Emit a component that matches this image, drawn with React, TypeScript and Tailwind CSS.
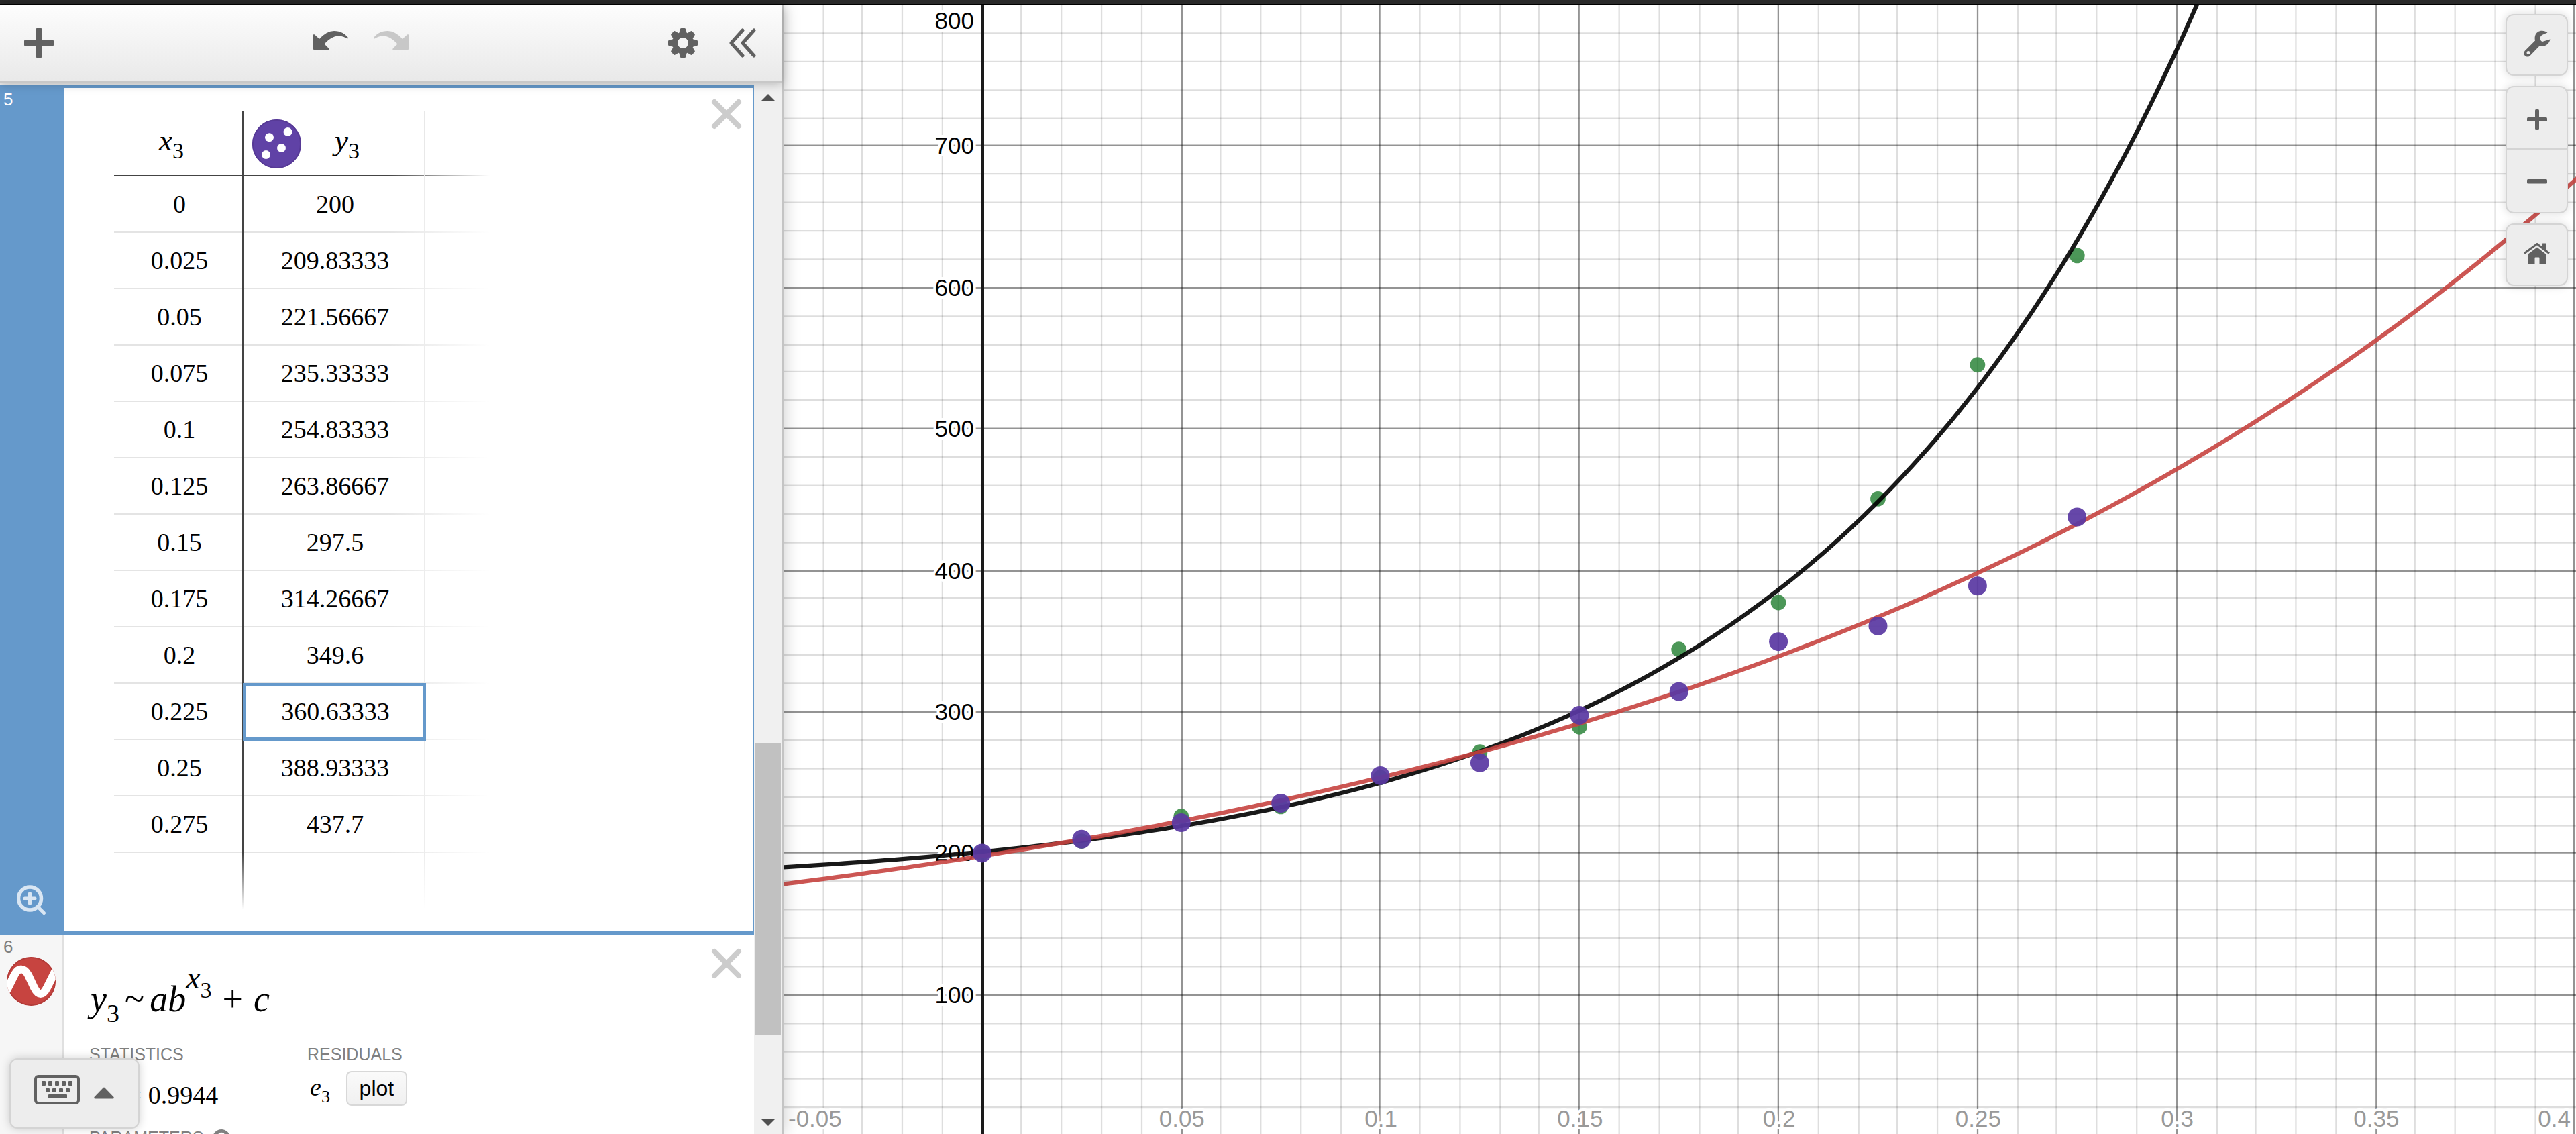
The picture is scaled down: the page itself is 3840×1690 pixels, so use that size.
import React from "react";

const rows: [string, string][] = [
  ["0", "200"],
  ["0.025", "209.83333"],
  ["0.05", "221.56667"],
  ["0.075", "235.33333"],
  ["0.1", "254.83333"],
  ["0.125", "263.86667"],
  ["0.15", "297.5"],
  ["0.175", "314.26667"],
  ["0.2", "349.6"],
  ["0.225", "360.63333"],
  ["0.25", "388.93333"],
  ["0.275", "437.7"],
];
const selectedRow = 9;

const greenPoints: [number, number][] = [
  [0, 200],
  [0.025, 208.5],
  [0.05, 226],
  [0.075, 233],
  [0.1, 253.5],
  [0.125, 271.5],
  [0.15, 289.3],
  [0.175, 344.1],
  [0.2, 377.2],
  [0.225, 450.6],
  [0.25, 545.3],
  [0.275, 622.6],
];

const px = (x: number) => 1464 + 5935.5 * x;
const py = (y: number) => 217.7 + (700 - y) * 2.1075;

// Grid lines fall on whole units of 2.497 pixels.
const gx = (i: number) => 1464.8 + Math.floor(0.15 + 23.77 * i) * 2.497;
const gy = (k: number) => 1.94 + Math.floor(86.92 + 16.879 * k) * 2.4972;

const curve = (f: (x: number) => number) => {
  const pts: string[] = [];
  for (let i = 0; i <= 230; i++) {
    const x = -0.0505 + i * 0.002;
    pts.push(`${px(x).toFixed(1)},${py(f(x)).toFixed(1)}`);
  }
  return pts.join(" ");
};
const blackCurve = curve((x) => 27.15 * Math.exp(10.286 * x) + 173.8);
const redCurve = curve((x) => 101.9 * Math.exp(4.346 * x) + 96.1);

const columns = Array.from({ length: 45 }, (_, i) => i - 4);
const lines = Array.from({ length: 40 }, (_, i) => i - 4);

function Graph() {
  return (
    <svg
      className="block h-full w-full"
      viewBox="1168 8 2672 1682"
      preserveAspectRatio="xMinYMin slice"
      role="img"
      aria-label="Graph of data and regression curves"
    >
      {columns.map((i) => (
        <line
          key={i}
          x1={gx(i)}
          x2={gx(i)}
          y1="8"
          y2="1690"
          stroke="#000"
          strokeOpacity={i % 5 === 0 ? 0.42 : 0.13}
          strokeWidth="2.3"
        />
      ))}
      {lines.map((k) => (
        <line
          key={k}
          x1="1168"
          x2="3840"
          y1={gy(k)}
          y2={gy(k)}
          stroke="#000"
          strokeOpacity={k % 5 === 0 ? 0.42 : 0.13}
          strokeWidth="2.3"
        />
      ))}
      <rect x="1463" y="8" width="4" height="1682" fill="#1a1a1a" />
      <g
        className="font-['Liberation_Sans',Arial,sans-serif] text-[35px]"
        stroke="#fff"
        strokeWidth="8"
        strokeLinejoin="round"
        paintOrder="stroke"
      >
        {[100, 200, 300, 400, 500, 600, 700].map((v) => (
          <text key={v} x="1452" y={Math.round(gy((700 - v) / 20)) + 12} textAnchor="end" fill="#000">
            {v}
          </text>
        ))}
        <text x="1452" y="43" textAnchor="end">
          800
        </text>
        <g fill="#999">
          <text x="1175" y="1679">
            -0.05
          </text>
          {[0.05, 0.1, 0.15, 0.2, 0.25, 0.3, 0.35].map((v) => (
            <text key={v} x={px(v) + 1} y="1679" textAnchor="middle">
              {v}
            </text>
          ))}
          <text x="3832" y="1679" textAnchor="end">
            0.4
          </text>
        </g>
      </g>
      <g fill="#388c46" fillOpacity="0.9">
        {greenPoints.map(([x, y]) => (
          <circle key={x} cx={px(x)} cy={py(y)} r="11.4" />
        ))}
      </g>
      <polyline points={blackCurve} fill="none" stroke="#000" strokeOpacity="0.9" strokeWidth="6.3" />
      <polyline points={redCurve} fill="none" stroke="#c74440" strokeOpacity="0.9" strokeWidth="6.3" />
      <g fill="#5a39a2" fillOpacity="0.93">
        {rows.map(([x, y]) => (
          <circle key={x} cx={px(Number(x))} cy={py(Number(y))} r="14" />
        ))}
      </g>
    </svg>
  );
}

function CloseIcon() {
  return (
    <svg className="block h-[46px] w-[46px]" viewBox="0 0 46 46" fill="none" stroke="#ccc" strokeWidth="8" strokeLinecap="round">
      <path d="M5 5L41 41M41 5L5 41" />
    </svg>
  );
}

function GearIcon() {
  return (
    <svg className="block h-11 w-11" viewBox="-22 -22 44 44" fill="#616161">
      <path
        fillRule="evenodd"
        d="M0 -16A16 16 0 1 0 0 16A16 16 0 1 0 0 -16ZM0 -8A8 8 0 1 1 0 8A8 8 0 1 1 0 -8Z"
      />
      {[0, 45, 90, 135, 180, 225, 270, 315].map((a) => (
        <path key={a} transform={`rotate(${a})`} d="M-6 -14L-4.300 -20.500Q-4 -22 -2.500 -22H2.500Q4 -22 4.300 -20.500L6 -14Z" />
      ))}
    </svg>
  );
}

function Toolbar() {
  return (
    <header className="relative z-10 flex h-[115px] shrink-0 items-center justify-between border-b-[3px] border-[#c8c8c8] bg-linear-to-b from-[#fdfdfd] to-[#e9e9e9] pr-[39px] pl-9 shadow-[0_2px_14px_rgba(0,0,0,0.25)]">
      <button type="button" aria-label="Add item">
        <svg className="block h-11 w-11" viewBox="0 0 44 44" fill="#616161">
          <rect x="0" y="17" width="44" height="10" rx="2" />
          <rect x="17" y="0" width="10" height="44" rx="2" />
        </svg>
      </button>
      <div className="flex gap-[38px] pb-2">
        <button type="button" aria-label="Undo">
          <svg className="block h-[29px] w-[52px]" viewBox="0 0 52 29" fill="#616161">
            <path d="M0 6.500Q0 4 2 5.500L9 12Q20 0 31 0C41 0 47 4 51.500 9.500Q52.500 11.500 50.500 11.500C38 4 28 7.500 16.500 19.500L23.300 26.300Q24.500 29 22 29H2.500Q0 29 0 26.500Z" />
          </svg>
        </button>
        <button type="button" aria-label="Redo" disabled>
          <svg className="block h-[29px] w-[52px]" viewBox="0 0 52 29" fill="#c8c8c8">
            <path
              transform="matrix(-1 0 0 1 52 0)"
              d="M0 6.500Q0 4 2 5.500L9 12Q20 0 31 0C41 0 47 4 51.500 9.500Q52.500 11.500 50.500 11.500C38 4 28 7.500 16.500 19.500L23.300 26.300Q24.500 29 22 29H2.500Q0 29 0 26.500Z"
            />
          </svg>
        </button>
      </div>
      <div className="flex gap-[47px]">
        <button type="button" aria-label="Edit list">
          <GearIcon />
        </button>
        <button type="button" aria-label="Hide list">
          <svg className="block h-11 w-10" viewBox="0 0 40 44" fill="none" stroke="#616161" strokeWidth="5" strokeLinecap="round" strokeLinejoin="round">
            <path d="M20 3L3 22L20 41M37 3L20 22L37 41" />
          </svg>
        </button>
      </div>
    </header>
  );
}

function DataTable() {
  return (
    <table className="mt-[35px] mb-8 w-[560px] table-fixed border-separate border-spacing-0 font-['Liberation_Serif',serif] text-[38px] leading-none text-black">
      <colgroup>
        <col className="w-[191px]" />
        <col className="w-[273px]" />
        <col />
      </colgroup>
      <thead>
        <tr className="h-[97px] bg-[linear-gradient(to_right,#444_73%,transparent)] bg-[length:100%_2px] bg-bottom bg-no-repeat">
          <th scope="col" className="p-0 pr-5 text-[45px] font-normal">
            <i>x</i>
            <span className="align-[-12px] text-[34px]">3</span>
          </th>
          <th scope="col" className="border-r-2 border-l-2 border-r-[#e8e8e8] border-l-[#444] p-0 font-normal">
            <div className="flex items-center gap-[50px] pl-[13px]">
              <button type="button" aria-label="Point style">
                <svg className="block h-[73px] w-[73px]" viewBox="0 0 73 73">
                  <circle cx="36.500" cy="36.500" r="36.500" fill="#6042a6" />
                  <circle cx="36.500" cy="36.500" r="35.500" fill="none" stroke="#573a96" strokeWidth="2" />
                  <g fill="#fff">
                    <circle cx="25.500" cy="26.700" r="6.500" />
                    <circle cx="53" cy="18.500" r="6.500" />
                    <circle cx="43.500" cy="42.500" r="6.500" />
                    <circle cx="20.500" cy="52.500" r="6.500" />
                  </g>
                </svg>
              </button>
              <span className="text-[45px]">
                <i>y</i>
                <span className="align-[-12px] text-[34px]">3</span>
              </span>
            </div>
          </th>
          <td className="p-0" />
        </tr>
      </thead>
      <tbody>
        {rows.map(([x, y], i) => (
          <tr
            key={x}
            className="h-[84px] bg-[linear-gradient(to_right,#e4e4e4_73%,transparent)] bg-[length:100%_2px] bg-bottom bg-no-repeat"
          >
            <td className="p-0 pb-[3px] pl-1 text-center">{x}</td>
            {i === selectedRow ? (
              <td className="border-l-2 border-l-[#444] p-0">
                <input
                  aria-label="y3 at x3 = 0.225"
                  defaultValue={y}
                  className="relative block h-[84px] w-full bg-white pr-px pb-[3px] pl-1 text-center outline-5 outline-offset-[-4px] outline-[#6599cb]"
                />
              </td>
            ) : (
              <td className="border-r-2 border-l-2 border-r-[#ececec] border-l-[#444] p-0 pb-[3px] pl-1 text-center">{y}</td>
            )}
            <td className="p-0" />
          </tr>
        ))}
        <tr className="h-[84px]">
          <td className="p-0" />
          <td className="bg-[linear-gradient(to_bottom,#444,transparent),linear-gradient(to_bottom,#ececec,transparent)] bg-[length:2px_100%,2px_100%] bg-[position:left,right] bg-no-repeat p-0" />
          <td className="p-0" />
        </tr>
      </tbody>
    </table>
  );
}

function Regression() {
  return (
    <section className="flex min-h-0 flex-1">
      <div className="w-[95px] shrink-0 border-r-2 border-[#e0e0e0] bg-[#f6f6f6]">
        <div className="pt-[6px] pb-[2px] pl-[5px] text-[26px] leading-[25px] text-[#808080]">6</div>
        <button type="button" aria-label="Curve style" className="ml-[10px]">
          <svg className="block h-[73px] w-[73px]" viewBox="0 0 73 73">
            <clipPath id="disc">
              <circle cx="36.500" cy="36.500" r="36.500" />
            </clipPath>
            <g clipPath="url(#disc)">
              <rect width="73" height="73" fill="#c74440" />
              <circle cx="36.500" cy="36.500" r="35.500" fill="none" stroke="#b23c39" strokeWidth="2" />
              <path
                d="M-2 54L12 26C18 16 26 16 32 27L41 46C47 58 54 58 60 46L75 16"
                fill="none"
                stroke="#fff"
                strokeWidth="12"
              />
            </g>
          </svg>
        </button>
      </div>
      <div className="min-w-0 flex-1 bg-white pl-[38px]">
        <div className="h-[166px] pt-10 pl-[2px] font-['Liberation_Serif',serif] text-[54px] leading-[96px] whitespace-nowrap text-black">
          <p>
            <i>y</i>
            <span className="align-[-16px] text-[38px] leading-none">3</span>
            <span className="mx-2">~</span>
            <i>ab</i>
            <i className="align-[34px] text-[48px] leading-none">x</i>
            <span className="align-[20px] text-[34px] leading-none">3</span>
            <span className="mx-4">+</span>
            <i>c</i>
          </p>
        </div>
        <div className="flex">
          <div className="w-[325px]">
            <h3 className="text-[25px] leading-[25px] text-[#808080]">STATISTICS</h3>
            <p className="mt-[26px] font-['Liberation_Serif',serif] text-[38px] leading-[38px] text-black">
              <i>R</i>
              <sup className="align-[14px] text-[26px] leading-none">2</sup>
              <span className="mr-[10px] ml-5">=</span>0.9944
            </p>
          </div>
          <div>
            <h3 className="text-[25px] leading-[25px] text-[#808080]">RESIDUALS</h3>
            <div className="mt-3 flex items-center gap-6 pl-1">
              <p className="font-['Liberation_Serif',serif] text-[38px] leading-[46px] text-black">
                <i>e</i>
                <span className="align-[-10px] text-[26px] leading-none">3</span>
              </p>
              <button
                type="button"
                className="h-[52px] w-[91px] rounded-lg border-2 border-[#d8d8d8] bg-linear-to-b from-[#fafafa] to-[#f0f0f0] text-[32px] leading-[44px] text-black"
              >
                plot
              </button>
            </div>
          </div>
        </div>
        <div className="mt-7 flex items-start gap-[14px] text-[#808080]">
          <h3 className="pt-1 text-[25px] leading-[25px]">PARAMETERS</h3>
          <button
            type="button"
            aria-label="About parameters"
            className="mt-1 flex h-[26px] w-[26px] items-center justify-center rounded-full bg-[#808080]"
          >
            <svg className="block h-[18px] w-[12px]" viewBox="0 0 12 18" fill="none" stroke="#fff" strokeWidth="3">
              <path d="M2 6C2 1 10 1 10 6C10 9 6 9 6 12.500M6 14.500V17.500" />
            </svg>
          </button>
        </div>
      </div>
      <button type="button" aria-label="Delete expression 6" className="mt-5 mr-[18px] self-start">
        <CloseIcon />
      </button>
    </section>
  );
}

function Scrollbar() {
  return (
    <div className="flex w-[42px] shrink-0 flex-col items-center bg-[#f0f0f0]">
      <svg className="mt-[17px] mb-2 block h-[10px] w-5 shrink-0" viewBox="0 0 20 10" fill="#505050">
        <path d="M0 10L10 0L20 10Z" />
      </svg>
      <div className="flex min-h-0 w-full flex-1 flex-col items-center">
        <div className="flex-[949]" />
        <div className="w-[38px] flex-[435] bg-[#c1c1c1]" />
        <div className="flex-[118]" />
      </div>
      <svg className="mt-2 mb-3 block h-[10px] w-5 shrink-0" viewBox="0 0 20 10" fill="#505050">
        <path d="M0 0L10 10L20 0Z" />
      </svg>
    </div>
  );
}

function Panel() {
  return (
    <aside className="relative z-10 flex w-[1168px] shrink-0 flex-col border-r-2 border-[#c4c4c4] bg-white shadow-[0_0_24px_rgba(0,0,0,0.22)]">
      <Toolbar />
      <div className="flex min-h-0 flex-1">
        <div className="flex min-w-0 flex-1 flex-col overflow-hidden">
          <div className="h-[3px] shrink-0 bg-[#eee]" />
          <section className="flex shrink-0 border-t-[5px] border-r-2 border-b-[6px] border-[#6599cb]">
            <div className="flex w-[95px] shrink-0 flex-col justify-between bg-[#6599cb]">
              <div className="pt-[5px] pl-[5px] text-[26px] leading-[25px] text-white">5</div>
              <button type="button" aria-label="Zoom fit" className="mb-6 ml-[25px] self-start">
                <svg className="block h-11 w-11" viewBox="0 0 44 44" fill="none" stroke="#d9e6f3" strokeLinecap="round">
                  <circle cx="19.500" cy="20" r="17" strokeWidth="5.500" />
                  <path d="M32 33L40.500 41.500M19.500 12.500V27.500M12 20H27" strokeWidth="5" />
                </svg>
              </button>
            </div>
            <div className="flex flex-1 items-start justify-between bg-white pr-4 pl-[75px]">
              <DataTable />
              <button type="button" aria-label="Delete table 5" className="mt-4">
                <CloseIcon />
              </button>
            </div>
          </section>
          <Regression />
        </div>
        <Scrollbar />
      </div>
      <button
        type="button"
        aria-label="Show keypad"
        className="absolute bottom-2 left-[14px] flex h-[105px] w-[194px] items-center rounded-xl border-2 border-[#d4d4d4] bg-[#ededed] pb-3 pl-[35px] shadow-[0_0_14px_rgba(0,0,0,0.18)]"
      >
        <svg className="block h-[44px] w-[120px]" viewBox="0 0 120 44" fill="#616161">
          <rect x="2" y="2" width="64" height="40" rx="4" fill="none" stroke="#616161" strokeWidth="4" />
          {[11, 21, 31, 41, 51].map((x) => (
            <rect key={x} x={x} y="9" width="6" height="7" rx="1" />
          ))}
          {[17, 27, 37, 47].map((x) => (
            <rect key={x} x={x} y="20" width="6" height="6" rx="1" />
          ))}
          <rect x="21" y="29" width="28" height="6" rx="1" />
          <path d="M103 19Q104 18 105 19L118.500 33Q119.500 35.500 117 35.500H91Q88.500 35.500 89.500 33Z" />
        </svg>
      </button>
    </aside>
  );
}

function GraphControls() {
  return (
    <div className="absolute top-[13px] right-3 flex w-[93px] flex-col gap-[15px]">
      <button
        type="button"
        aria-label="Graph settings"
        className="flex h-[92px] items-center justify-center rounded-xl border-2 border-[#d4d4d4] bg-[#ededed] pb-1 shadow-[0_0_14px_rgba(0,0,0,0.15)]"
      >
        <svg className="block h-10 w-10" viewBox="0 0 40 40">
          <path
            fillRule="evenodd"
            fill="#616161"
            d="M35.500 3.500C29 -1.500 19 0.500 17 8.500C16.300 11 16.600 13.500 17 15.500L2 30.500C-0.300 33 0 36 2 38C4 40 7.500 40.300 9.500 38L23.500 23.500C30 25.500 38 21.500 39.500 13.500L28 17Q24 15.500 24.500 11Q25.500 8 27.500 7ZM7 31A2.500 2.500 0 1 1 7 36A2.500 2.500 0 1 1 7 31Z"
          />
        </svg>
      </button>
      <div className="flex flex-col rounded-xl border-2 border-[#d4d4d4] bg-[#ededed] shadow-[0_0_14px_rgba(0,0,0,0.15)]">
        <button type="button" aria-label="Zoom in" className="flex h-[93px] items-center justify-center border-b-2 border-[#d4d4d4] pt-1">
          <svg className="block h-[30px] w-[30px]" viewBox="0 0 30 30" fill="#616161">
            <rect x="0" y="12" width="30" height="6" rx="1.500" />
            <rect x="12" y="0" width="6" height="30" rx="1.500" />
          </svg>
        </button>
        <button type="button" aria-label="Zoom out" className="flex h-[93px] items-center justify-center">
          <svg className="block h-[30px] w-[30px]" viewBox="0 0 30 30" fill="#616161">
            <rect x="0" y="12" width="30" height="6.500" rx="1.500" />
          </svg>
        </button>
      </div>
      <button
        type="button"
        aria-label="Default viewport"
        className="flex h-[93px] items-center justify-center rounded-xl border-2 border-[#d4d4d4] bg-[#ededed] pb-1 shadow-[0_0_14px_rgba(0,0,0,0.15)]"
      >
        <svg className="block h-8 w-10" viewBox="0 0 40 32" fill="#616161">
          <path d="M1 15.500L20 1.500L38 15.500" fill="none" stroke="#616161" strokeWidth="3" />
          <path d="M27.500 1.500Q27.500 0.500 28.500 0.500H32.500Q33.500 0.500 33.500 1.500V11.500L27.500 7Z" />
          <path d="M20 6.500L33.500 17V30Q33.500 31.500 32 31.500H23.500V22.500Q23.500 21.500 22.500 21.500H17.500Q16.500 21.500 16.500 22.500V31.500H7.500Q6 31.500 6 30V17Z" />
        </svg>
      </button>
    </div>
  );
}

export default function App() {
  return (
    <div className="flex h-screen w-full flex-col overflow-hidden bg-white font-['Liberation_Sans',Arial,sans-serif]">
      <div className="h-2 shrink-0 border-b-2 border-black bg-[#2a2a2a]" />
      <div className="flex min-h-0 flex-1">
        <Panel />
        <main className="relative min-w-0 flex-1 overflow-hidden">
          <Graph />
          <GraphControls />
        </main>
      </div>
    </div>
  );
}
